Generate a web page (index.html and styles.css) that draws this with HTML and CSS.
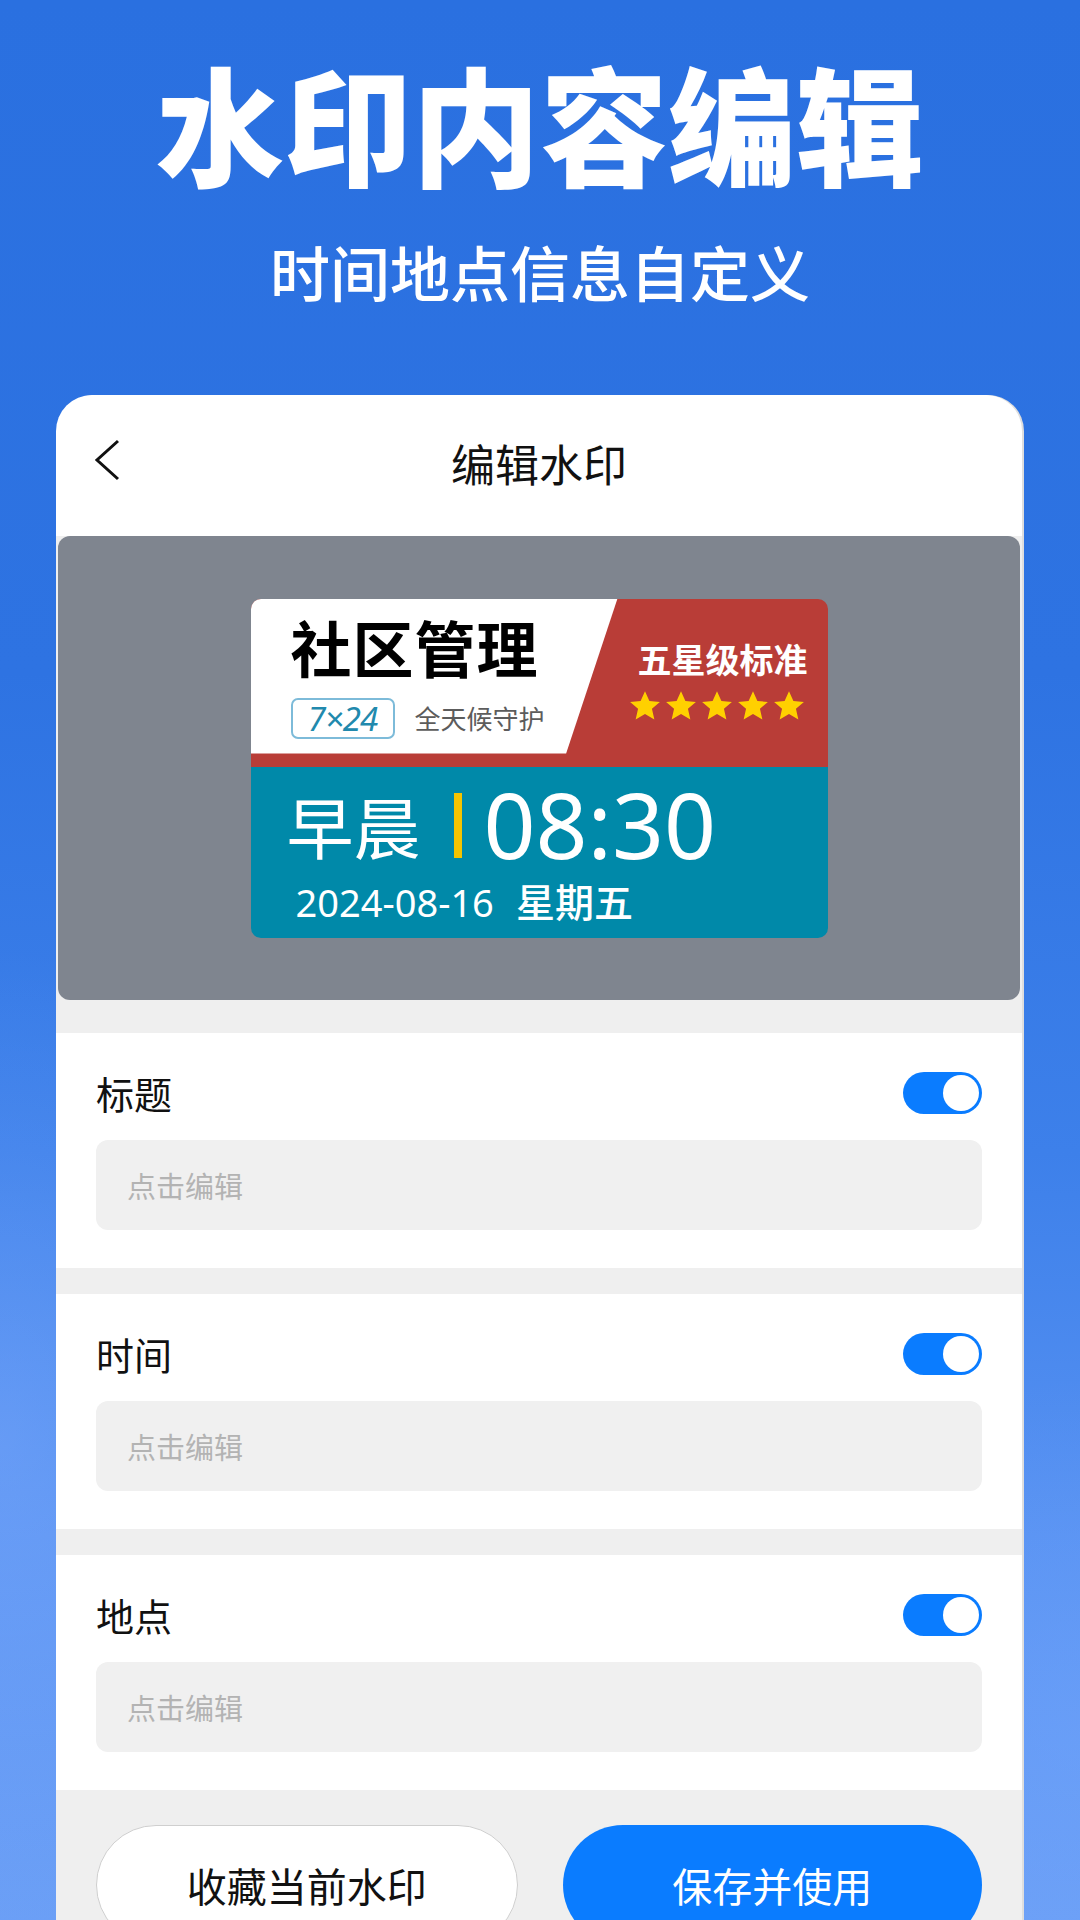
FILE: index.html
```html
<!DOCTYPE html>
<html lang="zh-CN">
<head>
    <meta charset="UTF-8">
    <meta name="viewport" content="width=1080, initial-scale=1.0">
    <title>水印内容编辑</title>
    <link rel="stylesheet" href="styles.css">
</head>
<body>

<div class="hero">
    <h1>水印内容编辑</h1>
    <p>时间地点信息自定义</p>
</div>

<div class="card">
    <div class="card-header">
        <svg class="back" width="30" height="44" viewBox="0 0 30 44">
            <polyline points="25,3 4,22 25,41" fill="none" stroke="#111" stroke-width="3" stroke-linejoin="miter"/>
        </svg>
        <div class="card-title">编辑水印</div>
    </div>

    <div class="card-body">
        <div class="preview">
            <div class="wm">
                <div class="wm-top">
                    <div class="wm-white">
                        <div class="wm-title">社区管理</div>
                        <div class="wm-sub">
                            <span class="badge">7×24</span>
                            <span class="wm-note">全天候守护</span>
                        </div>
                    </div>
                    <div class="wm-red">
                        <div class="wm-rank">五星级标准</div>
                        <div class="stars">
                            <svg viewBox="0 0 24 24"><path d="M12 1.5l3.1 7 7.4.6-5.6 4.9 1.7 7.5L12 17.6l-6.6 3.9 1.7-7.5-5.6-4.9 7.4-.6z"/></svg>
                            <svg viewBox="0 0 24 24"><path d="M12 1.5l3.1 7 7.4.6-5.6 4.9 1.7 7.5L12 17.6l-6.6 3.9 1.7-7.5-5.6-4.9 7.4-.6z"/></svg>
                            <svg viewBox="0 0 24 24"><path d="M12 1.5l3.1 7 7.4.6-5.6 4.9 1.7 7.5L12 17.6l-6.6 3.9 1.7-7.5-5.6-4.9 7.4-.6z"/></svg>
                            <svg viewBox="0 0 24 24"><path d="M12 1.5l3.1 7 7.4.6-5.6 4.9 1.7 7.5L12 17.6l-6.6 3.9 1.7-7.5-5.6-4.9 7.4-.6z"/></svg>
                            <svg viewBox="0 0 24 24"><path d="M12 1.5l3.1 7 7.4.6-5.6 4.9 1.7 7.5L12 17.6l-6.6 3.9 1.7-7.5-5.6-4.9 7.4-.6z"/></svg>
                        </div>
                    </div>
                </div>
                <div class="wm-bottom">
                    <div class="wm-time">
                        <span class="wm-period">早晨</span>
                        <span class="wm-bar"></span>
                        <span class="wm-clock">08:30</span>
                    </div>
                    <div class="wm-date">2024-08-16<span class="wm-week">星期五</span></div>
                </div>
            </div>
        </div>

        <div class="field field-first">
            <div class="field-row">
                <span class="field-label">标题</span>
                <span class="toggle"><span class="knob"></span></span>
            </div>
            <div class="field-input">点击编辑</div>
        </div>

        <div class="field">
            <div class="field-row">
                <span class="field-label">时间</span>
                <span class="toggle"><span class="knob"></span></span>
            </div>
            <div class="field-input">点击编辑</div>
        </div>

        <div class="field">
            <div class="field-row">
                <span class="field-label">地点</span>
                <span class="toggle"><span class="knob"></span></span>
            </div>
            <div class="field-input">点击编辑</div>
        </div>

        <div class="actions">
            <button class="btn btn-light">收藏当前水印</button>
            <button class="btn btn-primary">保存并使用</button>
        </div>
    </div>
</div>

</body>
</html>
```

FILE: styles.css
```css
html, body {
    margin: 0;
    height: 1920px;
    overflow: hidden;
}
body {
    font-family: "Noto Sans CJK SC", "Noto Sans", sans-serif;
    background:
        radial-gradient(ellipse 500px 700px at 0% 75%, rgba(140, 180, 255, 0.35), transparent 70%),
        radial-gradient(ellipse 400px 500px at 100% 90%, rgba(120, 170, 255, 0.3), transparent 70%),
        linear-gradient(180deg, #2a70e0 0%, #2e73e2 35%, #3d80ea 60%, #5892f2 80%, #6b9ff6 100%);
}
.hero {
    text-align: center;
    color: #fff;
    padding-top: 58px;
}
.hero h1 {
    margin: 0;
    font-size: 128px;
    line-height: 1;
    font-weight: 900;
}
.hero p {
    margin: 55px 0 0;
    font-size: 60px;
    line-height: 1;
    font-weight: 500;
}
.card {
    margin: 94px 58px 0 56px;
    height: 1600px;
    background: #fff;
    border-radius: 36px 36px 0 0;
    overflow: hidden;
    box-shadow: 2px 0 0 #dedede;
}
.card-header {
    height: 141px;
    display: flex;
    align-items: center;
    justify-content: center;
    position: relative;
}
.back {
    position: absolute;
    left: 37px;
    top: 43px;
}
.card-title {
    font-size: 44px;
    color: #111;
    line-height: 1;
    margin-top: -6px;
}
.card-body {
    background: #efefef;
    height: 100%;
}
.preview {
    margin: 0 2px;
    height: 464px;
    background: #7f858f;
    border-radius: 12px;
    display: flex;
    align-items: center;
    justify-content: center;
}
.wm {
    width: 577px;
    height: 339px;
    border-radius: 10px;
    overflow: hidden;
    display: flex;
    flex-direction: column;
}
.wm-top {
    height: 168px;
    background: #b93d37;
    display: flex;
}
.wm-white {
    width: 367px;
    height: 155px;
    box-sizing: border-box;
    background: #fff;
    clip-path: polygon(0 0, 100% 0, 86% 100%, 0 100%);
    border-bottom-right-radius: 14px;
    padding: 17px 0 0 40px;
}
.wm-title {
    font-size: 61px;
    font-weight: 700;
    line-height: 1;
    color: #000;
    letter-spacing: 1px;
}
.wm-sub {
    display: flex;
    align-items: center;
    margin-top: 21px;
}
.badge {
    width: 104px;
    height: 41px;
    box-sizing: border-box;
    border: 2px solid #7dbbd9;
    border-radius: 7px;
    color: #2189ad;
    font-family: "Noto Sans", sans-serif;
    font-style: italic;
    font-size: 33px;
    line-height: 37px;
    text-align: center;
    letter-spacing: -1px;
}
.wm-note {
    margin-left: 20px;
    font-size: 26px;
    line-height: 1;
    color: #5c5c5c;
}
.wm-red {
    flex: 1;
    display: flex;
    flex-direction: column;
    align-items: center;
    padding-top: 43px;
}
.wm-rank {
    font-size: 34px;
    line-height: 1;
    font-weight: 700;
    color: #fff;
}
.stars {
    display: flex;
    gap: 2px;
    margin-top: 13px;
    margin-left: -12px;
}
.stars svg {
    width: 34px;
    height: 34px;
    fill: #ffd000;
}
.wm-bottom {
    flex: 1;
    background: #0089a9;
    color: #fff;
    padding: 12px 0 0 36px;
}
.wm-time {
    height: 92px;
    display: flex;
    align-items: center;
}
.wm-period {
    font-size: 67px;
    line-height: 1;
}
.wm-bar {
    width: 8px;
    height: 65px;
    background: #f5c400;
    margin: 2px 22px 0 33px;
}
.wm-clock {
    font-family: "Noto Sans", sans-serif;
    font-size: 91px;
    line-height: 1;
}
.wm-date {
    margin: 10px 0 0 9px;
    font-family: "Noto Sans", "Noto Sans CJK SC", sans-serif;
    font-size: 38px;
    line-height: 1;
}
.wm-week {
    font-family: "Noto Sans CJK SC", sans-serif;
    font-weight: 500;
    font-size: 39px;
    margin-left: 22px;
}
.field {
    background: #fff;
    padding: 39px 40px 38px;
    margin-top: 26px;
}
.field-first {
    margin-top: 33px;
}
.field-row {
    height: 42px;
    display: flex;
    align-items: center;
    justify-content: space-between;
}
.field-label {
    font-size: 38px;
    line-height: 1;
    color: #111;
}
.toggle {
    width: 79px;
    height: 42px;
    border-radius: 21px;
    background: #0a7cff;
    position: relative;
}
.knob {
    position: absolute;
    right: 3px;
    top: 3px;
    width: 36px;
    height: 36px;
    border-radius: 50%;
    background: #fff;
}
.field-input {
    margin-top: 26px;
    height: 90px;
    border-radius: 12px;
    background: #f0f0f0;
    padding-left: 31px;
    display: flex;
    align-items: center;
    font-size: 29px;
    color: #b3b3b3;
}
.actions {
    display: flex;
    gap: 45px;
    padding: 35px 40px 0;
}
.btn {
    flex: 1;
    height: 120px;
    border-radius: 60px;
    font-family: "Noto Sans CJK SC", sans-serif;
    font-size: 40px;
    cursor: pointer;
}
.btn-light {
    background: #fff;
    color: #111;
    border: 1.5px solid #cfcfcf;
}
.btn-primary {
    background: #0a7cff;
    color: #fff;
    border: none;
}
```
